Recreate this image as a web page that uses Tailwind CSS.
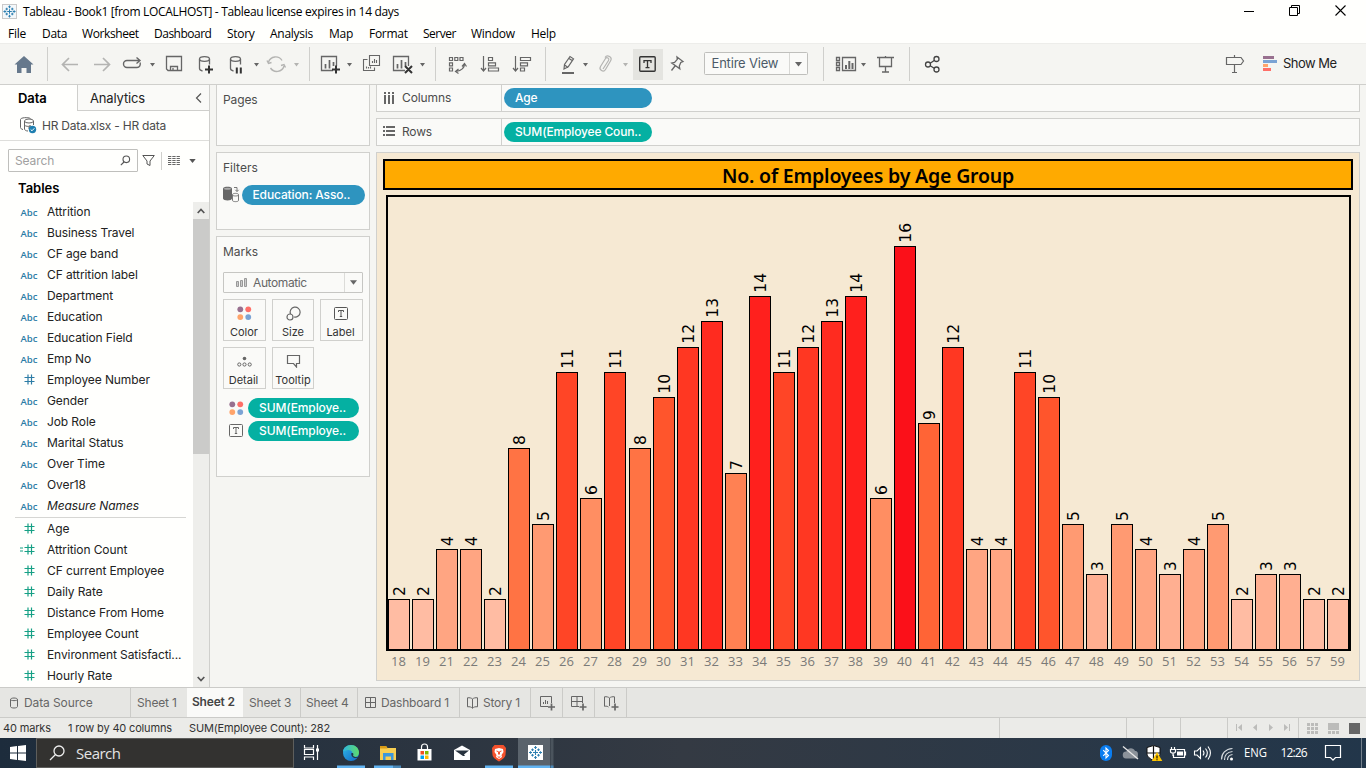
<!DOCTYPE html>
<html lang="en">
<head>
<meta charset="utf-8">
<title>Tableau - Book1</title>
<script src="https://cdn.jsdelivr.net/npm/@tailwindcss/browser@4"></script>
</head>
<body class="w-[1366px] h-[768px] overflow-hidden flex flex-col bg-[#f5f5f2] font-['Inter','Noto_Sans',sans-serif] text-[12px] text-[#333] leading-none">

<svg class="hidden">
  <defs>
    <symbol id="caret" viewBox="0 0 8 5"><path d="M0 0h8L4 5z" fill="currentColor"/></symbol>
    <symbol id="label" viewBox="0 0 14 14"><rect x=".5" y=".5" width="13" height="12" rx="1" fill="none" stroke="currentColor"/><path d="M4.500 5V3.500h5V5M7 3.500v6M5.800 9.500h2.400" fill="none" stroke="currentColor"/></symbol>
    <symbol id="dots" viewBox="0 0 16 16"><circle cx="3.500" cy="3.500" r="3.100" fill="#98708f"/><circle cx="12" cy="3.500" r="3.100" fill="#ff6f68"/><circle cx="3.500" cy="11.800" r="3.100" fill="#ffa46b"/><circle cx="12" cy="11.800" r="3.100" fill="#7ba3d4"/></symbol>
    <symbol id="hash" viewBox="0 0 11 11"><path d="M4 .5v10M7.500 .5v10M.5 3.500h10M.5 7.500h10" fill="none" stroke="currentColor" stroke-width="1.200"/></symbol>
    <symbol id="snow" viewBox="0 0 14 14"><path d="M7 4.500v5M4.500 7h5M7 .5v3M5.700 2h2.600M7 10.500v3M5.700 12h2.600M.5 7h3M2 5.700v2.600M10.500 7h3M12 5.700v2.600M4 3v2.600M2.700 4.300h2.600M10 3v2.600M8.700 4.300h2.600M4 8.400V11M2.700 9.700h2.600M10 8.400V11M8.700 9.700h2.600" fill="none" stroke="#2d7fb0" stroke-width="1.100"/></symbol>
  </defs>
</svg>

<!-- Title bar -->
<header class="h-[23px] shrink-0 bg-[#fffffd] flex items-center pl-[2px] font-['Open_Sans',sans-serif] text-black">
  <div class="w-[15px] h-[15px] border border-[#c9c9c9] bg-[#f4f8fa] flex items-center justify-center"><svg class="w-[13px] h-[13px]"><use href="#snow"/></svg></div>
  <span class="ml-[6px] text-[12px] tracking-[-0.33px] whitespace-nowrap">Tableau - Book1 [from LOCALHOST] - Tableau license expires in 14 days</span>
  <div class="ml-auto flex items-center pr-[20px] pb-[2px] gap-[35px]">
    <svg width="10" height="10"><path d="M0 5.500h10" stroke="#000"/></svg>
    <svg width="11" height="11" fill="none" stroke="#000"><path d="M.5 2.500h8v8h-8zM2.500 2.500v-2h8v8h-2"/></svg>
    <svg width="11" height="11"><path d="M.5 .5l10 10M10.500 .5l-10 10" stroke="#000" stroke-width="1.100"/></svg>
  </div>
</header>

<!-- Menu -->
<nav class="h-[20px] shrink-0 bg-[#fffffd] flex items-center pl-[8px] pt-[2px] font-['Open_Sans',sans-serif] text-[12px] text-black tracking-[-0.28px] whitespace-nowrap">
  <span class="w-[34px]">File</span><span class="w-[40px]">Data</span><span class="w-[72px] tracking-[-0.4px]">Worksheet</span><span class="w-[73px] tracking-[-0.5px]">Dashboard</span><span class="w-[43px]">Story</span><span class="w-[59px]">Analysis</span><span class="w-[40px]">Map</span><span class="w-[54px]">Format</span><span class="w-[48px] tracking-[-0.5px]">Server</span><span class="w-[60px]">Window</span><span>Help</span>
</nav>

<!-- Toolbar -->
<div class="h-[42px] shrink-0 border-t border-b border-t-[#ededea] border-b-[#cfcfcc] text-[#666]">
 <svg width="1366" height="40" viewBox="0 44 1366 40" fill="none" stroke="#666" stroke-width="1.300">
  <path d="M24 56l9.500 8.500H31V73h-4.500v-5h-5v5H17v-8.500h-2.500z" fill="#66788c" stroke="none"/>
  <path d="M47.500 47v34M309.500 47v34M435.500 47v34M545.500 47v34M823.500 47v34M909.500 47v34" stroke="#cfcfcc" stroke-width="1"/>
  <path d="M78 64.500H63M69 58l-6.500 6.500L69 71M94 64.500h15M103 58l6.500 6.500L103 71" stroke="#b4b4b2" stroke-width="1.700"/>
  <path d="M134 60.500h-7a3.500 3.500 0 0 0 0 7h10a3.500 3.500 0 0 0 3-5M134 60.500h5.500M136.500 57.500l3.500 3-3.500 3" stroke-width="1.400"/>
  <path d="M166.500 56.500h15v14h-13.500l-1.500-1.500zM170.500 70v-3.500h7V70M173 70v-2"/>
  <path d="M199.500 59v9.500c0 1.300 1 2 3 2.500M209.500 59v5.500M230.500 59v9.500c0 1.300 1 2 3 2.500M240.500 59v5.500" />
  <ellipse cx="204.500" cy="59" rx="5" ry="2.300"/><ellipse cx="235.500" cy="59" rx="5" ry="2.300"/>
  <path d="M205 69.500h8M209 65.500v8M236.800 67.500v6M240.800 67.500v6" stroke="#333" stroke-width="2"/>
  <path d="M268.500 62a7.500 7.500 0 0 1 13.500-1.500M284 66a7.500 7.500 0 0 1-13.500 2M267 60.500l1.500 3 3-1M285.500 67.500l-1.500-3-3 1" stroke="#b4b4b2" stroke-width="1.400"/>
  <path d="M333 70.500h-11.500v-14h15V66M405 70.500h-11.500v-14h15V66"/>
  <path d="M325.500 64v4.500M329.500 60v8.500M333.500 62v4M397.500 64v4.500M401.500 60v8.500M405.500 62v4" stroke-width="1.700"/>
  <path d="M332 69.500h8M336 65.500v8M405 66l7 7M412 66l-7 7" stroke="#333" stroke-width="2"/>
  <path d="M369.500 55.500h10v10h-10zM367.500 59.500h-4v11h11v-3M372.500 63v-2M374.500 63v-4M376.500 63v-3M366.500 68.500v-2M368.500 68.500v-1.500M370.500 68.500v-2" stroke-width="1.100"/>
  <g stroke="none" fill="#666"><path d="M150 63h5l-2.500 3.500zM254 63h5l-2.500 3.500zM347 63h5l-2.500 3.500zM420 63h5l-2.500 3.500zM583 63h5l-2.500 3.500zM861 63h5l-2.500 3.500z"/><path d="M294 63h5l-2.500 3.500zM623 63h5l-2.500 3.500z" fill="#b4b4b2"/></g>
  <g stroke-width="1.200"><path d="M449.500 57.500h3v3h-3zM454.800 57.500h3v3h-3zM460 57.500h3v3h-3zM449.500 62.800h3v3h-3zM449.500 68h3v3h-3zM464.500 64c0 4-3 6.500-8.500 7.500M462 66.500l2.500-3 2 3M458.500 69l-3 2.500 3 2"/>
  <path d="M483.500 56v14M481 68l2.500 3 2.500-3M488.500 57.500h4v3h-4zM488.500 62.800h7v3h-7zM488.500 68h10v3h-10zM515.500 56v14M513 68l2.500 3 2.500-3M520.500 57.500h10v3h-10zM520.500 62.800h7v3h-7zM520.500 68h4v3h-4z"/></g>
  <path d="M564 69l.5-4.500 5.500-8 3.500 2.300-5.300 8zM564.500 65l3.700 2.500M569 58.500l3.500 2.300" stroke-width="1.200"/><path d="M562 73h12" stroke-width="2"/>
  <path d="M603 69l5.500-8.500a1.800 1.800 0 0 0-3-2l-5 8a2.800 2.800 0 0 0 5 3l5-8.500a3 3 0 0 0-5.500-3.500" stroke="#b4b4b2" stroke-width="1.200"/>
  <rect x="633" y="49" width="30" height="31" fill="#e4e4e0" stroke="none"/>
  <rect x="639.700" y="56.700" width="15.500" height="14.500" rx="1" stroke="#333" stroke-width="1.400"/><path d="M644 63v-2.300h7V63M647.500 60.700v7M645.500 67.700h4" stroke="#333"/>
  <path d="M677 57l6 4.500-2.200 1-1.500 3.500.5 2.700-8-5.700 2.800-.6 2.700-3zM675 66l-3.500 4.500"/>
  <rect x="704.500" y="52.500" width="103" height="22" rx="1" fill="#fafaf8" stroke="#bfbfbc" stroke-width="1"/><path d="M789.500 53v21" stroke="#d8d8d5" stroke-width="1"/><path d="M795 62h7l-3.500 4.500z" fill="#666" stroke="none"/>
  <path d="M842.500 57.500h13v13h-13zM836.500 57.500h3v3h-3zM836.500 62.500h3v3h-3zM836.500 67.500h3v3h-3z"/><path d="M846 65v4M849.300 61v8M852.500 63v6" stroke-width="2"/>
  <path d="M877 57.500h17M879.500 58v8.500h12V58M885.500 56v1M885.500 67v5M882 72h7"/>
  <g stroke="#444"><circle cx="928" cy="64.500" r="2.500"/><circle cx="936.500" cy="59" r="2.500"/><circle cx="936.500" cy="69.500" r="2.500"/><path d="M930.200 63.200l4-2.700M930.200 65.800l4 2.400"/></g>
  <path d="M1226.500 57.500h14.500l2.500 3.500-2.500 3.500h-14.500zM1234.500 55v2.500M1234.500 64.500v8M1232 72.500h5" stroke-width="1.200"/>
  <g stroke="none"><path d="M1263 56h11v3h-11z" fill="#98708f"/><path d="M1263 60h14v3h-14z" fill="#7ba3d4"/><path d="M1263 64h5v3h-5z" fill="#ffa46b"/><path d="M1263 68h8v3h-8z" fill="#ff6f68"/></g>
  <text x="711.500" y="68" fill="#4c5a68" stroke="none" font-size="13" textLength="67" class="font-['Inter']">Entire View</text>
  <text x="1283" y="68" fill="#222" stroke="none" font-size="13" textLength="54" class="font-['Inter']">Show Me</text>
 </svg>
</div>

<main class="flex h-[602px] shrink-0">
  <!-- Data pane -->
  <aside class="w-[210px] shrink-0 border-r border-[#cfcfcc] bg-[#fffffd] flex flex-col h-[602px] overflow-hidden">
    <div class="flex h-[26px] shrink-0 text-[13px]">
      <div class="w-[77px] pl-[18px] flex items-center font-semibold text-black tracking-[-0.1px]">Data</div>
      <div class="flex-1 border-l border-b border-[#cfcfcc] bg-[#fafaf8] flex items-center pl-[12px] pr-[7px] text-[#222] tracking-[-0.15px]"><span class="pt-px">Analytics</span><svg class="ml-auto" width="7" height="10"><path d="M6 .5L1.500 5 6 9.500" fill="none" stroke="#555" stroke-width="1.200"/></svg></div>
    </div>
    <div class="h-[30px] shrink-0 border-b border-[#dededb] flex items-center pl-[20px] text-[#4c4c4c]">
      <svg width="17" height="17" fill="none" stroke="#666"><ellipse cx="9" cy="4" rx="4.500" ry="2"/><path d="M4.500 4v8c0 1 1.500 2 3.500 2M13.500 4v4M10.500 1.500C8 0 .5 .5.500 2.500v8c0 1 1 1.700 2.500 2M4.500 8c1 1.500 4 1.700 6 1M8 11h2V8"/><circle cx="12.500" cy="12.500" r="3.700" fill="#1f7fb0" stroke="none"/><path d="M10.700 12.500l1.300 1.300 2.300-2.500" stroke="#fff"/></svg>
      <span class="ml-[5px] tracking-[-0.23px] whitespace-nowrap">HR Data.xlsx - HR data</span>
    </div>
    <div class="flex items-center h-[38px] shrink-0 pl-[8px] pt-[1px]">
      <div class="w-[130px] h-[23px] border border-[#bfbfbc] rounded-[1px] flex items-center pl-[6px] pr-[6px] text-[#a0a0a0] tracking-[-0.1px]">Search<svg class="ml-auto" width="11" height="11" fill="none" stroke="#555" stroke-width="1.100"><circle cx="6.300" cy="4.300" r="3.300"/><path d="M4 7L.8 10.200"/></svg></div>
      <svg class="ml-[4px]" width="13" height="13" fill="none" stroke="#555"><path d="M.8 1.500h11.500L8 7v4.500L5 10V7z"/></svg>
      <span class="ml-[6px] w-px h-[18px] bg-[#cfcfcc]"></span>
      <svg class="ml-[6px]" width="12" height="11" stroke="#666"><path d="M0 1.500h12M0 3.500h12M0 5.500h12M0 7.500h12M0 9.500h12" stroke-dasharray="3.300 1"/></svg>
      <svg class="ml-[9px] w-[7px] h-[4px] text-[#555]"><use href="#caret"/></svg>
    </div>
    <div class="h-[22px] shrink-0 pl-[18px] pt-[3px] text-[13px] font-semibold text-black">Tables</div>
    <div class="flex flex-1 min-h-0">
      <div class="flex-1 min-w-0 overflow-hidden">
        <div id="dims"></div>
        <div class="ml-[15px] mr-[7px] mt-[1px] h-px bg-[#d6d6d3]"></div>
        <div id="meas"></div>
      </div>
      <div class="w-[16px] mt-px bg-[#eeeeeb] flex flex-col items-center text-[#555]">
        <svg class="mt-[6px]" width="8" height="6" fill="none" stroke="currentColor" stroke-width="1.700"><path d="M.7 5L4 1.500 7.300 5"/></svg>
        <div class="mt-[5px] w-full h-[235px] bg-[#cbcbc9]"></div>
        <svg class="mt-auto mb-[5px]" width="8" height="6" fill="none" stroke="currentColor" stroke-width="1.700"><path d="M.7 1L4 4.500 7.300 1"/></svg>
      </div>
    </div>
  </aside>

  <!-- Cards -->
  <section class="ml-[6px] w-[154px] shrink-0 flex flex-col gap-[6px] text-[#4c4c4c]">
    <div class="h-[61px] border border-t-0 border-[#d0d0cd] bg-[#fafaf8] pt-[9px] pl-[6px] tracking-[-0.1px]">Pages</div>
    <div class="h-[78px] border border-[#d0d0cd] bg-[#fafaf8] pt-[9px] pl-[6px]">Filters
      <div class="flex items-center mt-[11px]">
        <svg width="18" height="18" viewBox="0 0 18 18"><path d="M0 2.500C0 0 9 0 9 2.500v10C9 15 0 15 0 12.500z" fill="#666"/><ellipse cx="4.500" cy="2.700" rx="3.500" ry="1" fill="#aaa"/><path d="M9.500 8.500c0-1.500 6-1.500 6 0v6c0 1.500-6 1.500-6 0zM9.500 9c0 1.300 6 1.300 6 0" fill="#fafaf8" stroke="#777"/><path d="M11 1.500h3v4M12.300 3.800L14 5.500l1.700-1.700" fill="none" stroke="#777"/></svg>
        <div class="ml-[1px] w-[123px] h-[20px] rounded-full bg-[#2e94bf] text-white flex items-center pl-[10.500px] font-medium tracking-[-0.13px] whitespace-nowrap">Education: Asso..</div>
      </div>
    </div>
    <div class="h-[241px] border border-[#d0d0cd] bg-[#fafaf8] pt-[9px] px-[6px]">Marks
      <div class="mt-[14px] h-[21px] w-[140px] border border-[#c6c6c3] rounded-[1px] flex items-center">
        <svg class="ml-[12px]" width="11" height="9" fill="#ccc" stroke="#999"><path d="M.5 3.500h2v5h-2zM4.500 2.500h2v6h-2zM8.500 .5h2v8h-2z"/></svg>
        <span class="ml-[6px] pt-px text-[#666] tracking-[-0.4px]">Automatic</span>
        <div class="ml-auto h-full w-[18px] border-l border-[#dcdcd9] flex items-center justify-center"><svg class="w-[7px] h-[5px] text-[#666]"><use href="#caret"/></svg></div>
      </div>
      <div class="mt-[6px] grid grid-cols-[43px_42px_43px] gap-[6px] text-[11px] text-[#333] text-center">
        <div class="h-[42px] border border-[#d0d0cd] flex flex-col items-center justify-between pt-[6px] pb-px"><svg class="w-[15px] h-[15px]"><use href="#dots"/></svg><span class="h-[14px] leading-[14px] pr-px">Color</span></div>
        <div class="h-[42px] border border-[#d0d0cd] flex flex-col items-center justify-between pt-[6px] pb-px"><svg width="15" height="15" fill="none" stroke="#666" stroke-width="1.200"><path d="M4.500 8a5 5 0 1 1 3.500 3"/><circle cx="4" cy="11" r="3"/></svg><span class="h-[14px] leading-[14px]">Size</span></div>
        <div class="h-[42px] border border-[#d0d0cd] flex flex-col items-center justify-between pt-[7px] pr-[2px] pb-px"><svg class="w-[14px] h-[14px] text-[#555]"><use href="#label"/></svg><span class="h-[14px] leading-[14px]">Label</span></div>
        <div class="h-[42px] border border-[#d0d0cd] flex flex-col items-center justify-between pt-[7px] pb-px"><svg width="15" height="13" fill="none" stroke="#666"><circle cx="7.500" cy="3.500" r="1.800" fill="#666" stroke="none"/><circle cx="2.300" cy="9.500" r="1.600"/><circle cx="7.500" cy="9.500" r="1.600"/><circle cx="12.700" cy="9.500" r="1.600"/></svg><span class="h-[14px] leading-[14px] pr-[2px]">Detail</span></div>
        <div class="h-[42px] border border-[#d0d0cd] flex flex-col items-center justify-between pt-[6px] pb-px"><svg width="15" height="14" fill="none" stroke="#666" stroke-width="1.200"><path d="M1.500 1.500h12v8h-3v3.500L7.500 9.500h-6z"/></svg><span class="h-[14px] leading-[14px]">Tooltip</span></div>
      </div>
      <div class="mt-[9px] pl-[6px] flex flex-col gap-[3px] text-white font-medium">
        <div class="flex items-center h-[20px]"><svg class="w-[15px] h-[15px]"><use href="#dots"/></svg><div class="ml-[4px] w-[111px] h-[20px] rounded-full bg-[#05b0a2] flex items-center pl-[11px] whitespace-nowrap tracking-[-0.1px]">SUM(Employe..</div></div>
        <div class="flex items-center h-[20px]"><svg class="w-[14px] h-[14px] text-[#666]"><use href="#label"/></svg><div class="ml-[5px] w-[111px] h-[20px] rounded-full bg-[#05b0a2] flex items-center pl-[11px] whitespace-nowrap tracking-[-0.1px]">SUM(Employe..</div></div>
      </div>
    </div>
  </section>

  <!-- Shelves and view -->
  <section class="ml-[6px] w-[984px] shrink-0 flex flex-col text-[#4c4c4c]">
    <div class="h-[27px] border border-t-0 border-[#d0d0cd] bg-[#fafaf8] flex items-center">
      <div class="w-[125px] h-full border-r border-[#d0d0cd] flex items-center pl-[7px] gap-[7px]"><svg class="-mt-[2px]" width="11" height="13" fill="#666"><path d="M0 1h2v2H0zM4 1h2v2H4zM8 1h2v2H8zM0 4h2v9H0zM4 4h2v9H4zM8 4h2v9H8z"/></svg><span class="tracking-[-0.1px]">Columns</span></div>
      <div class="ml-[2px] w-[148px] h-[20px] rounded-full bg-[#2e94bf] text-white flex items-center pl-[11px] font-medium tracking-[-0.2px]">Age</div>
    </div>
    <div class="mt-[6px] h-[28px] border border-[#d0d0cd] bg-[#fafaf8] flex items-center">
      <div class="w-[125px] h-full border-r border-[#d0d0cd] flex items-center pl-[6px] gap-[7px]"><svg class="-mt-[2px]" width="12" height="11" fill="#666"><path d="M0 0h2v2H0zM3 0h9v2H3zM0 4h2v2H0zM3 4h9v2H3zM0 8h2v2H0zM3 8h9v2H3z"/></svg><span class="tracking-[-0.2px]">Rows</span></div>
      <div class="ml-[2px] w-[148px] h-[20px] rounded-full bg-[#05b0a2] text-white flex items-center pl-[11px] font-medium tracking-[-0.15px] whitespace-nowrap">SUM(Employee Coun..</div>
    </div>
    <div class="mt-[6px] h-[529px] border border-[#d0d0cd] bg-[#f6e9d3] pt-[6px]">
      <div class="ml-[6px] w-[970px] h-[31px] border-2 border-black bg-[#ffaa00] flex items-center justify-center pt-[2px] font-['Noto_Sans',sans-serif] font-semibold text-[19.5px] text-black tracking-[-0.19px]"><span>No. of Employees by Age Group</span></div>
      <div id="bars" class="mt-[5px] ml-[9px] w-[965px] h-[456px] border-2 border-black flex items-end gap-[2px] font-['DejaVu_Sans',sans-serif] text-[15.5px] text-black"></div>
      <div id="ages" class="ml-[11px] w-[961px] mt-[2px] flex gap-[2px] font-['Open_Sans',sans-serif] text-[13px] text-[#7a7a78]"></div>
    </div>
  </section>
</main>

<!-- Sheet tabs -->
<div class="h-[31px] shrink-0 border-t border-b border-[#cbcbc8] bg-[#e6e6e3] flex text-[12px] text-[#666] whitespace-nowrap tracking-[-0.2px]">
  <div class="w-[131px] border-r border-[#cbcbc8] flex items-center pl-[10px] gap-[6px] tracking-[-0.1px]"><svg width="8" height="12" fill="none" stroke="#666"><path d="M.5 2.500v7c0 2 7 2 7 0v-7c0-2-7-2-7 0c0 1.500 7 1.500 7 0"/></svg>Data Source</div>
  <div class="w-[56px] flex items-center pl-[6px]">Sheet 1</div>
  <div class="w-[56px] bg-[#fafaf8] flex items-center pl-[5px] font-semibold text-[#444] pb-[2px]">Sheet 2</div>
  <div class="w-[58px] border-r border-[#cbcbc8] flex items-center pl-[6px]">Sheet 3</div>
  <div class="w-[57px] border-r border-[#cbcbc8] flex items-center pl-[5px]">Sheet 4</div>
  <div class="w-[102px] border-r border-[#cbcbc8] flex items-center pl-[7px] gap-[5px]"><svg width="11" height="11" fill="none" stroke="#666"><path d="M.5 .5h10v10H.5zM5.500 .5v10M.5 5.500h10"/></svg>Dashboard 1</div>
  <div class="w-[71px] border-r border-[#cbcbc8] flex items-center pl-[7px] gap-[5px]"><svg width="11" height="12" fill="none" stroke="#666"><path d="M.5 .8C2.500 .5 4.500 1 5.500 2c1-1 3-1.500 5-1.200v9c-2-.3-4 .2-5 1.500-1-1.300-3-1.800-5-1.500zM5.500 2v9"/></svg>Story 1</div>
  <div class="w-[32px] border-r border-[#cbcbc8] flex items-center justify-center pl-px"><svg width="15" height="16" fill="none" stroke="#666"><path d="M8 11.500H.5v-10h11V8M3.500 9V7M5.500 9V5M7.500 9V6"/><path d="M11.500 8.500v7M8 12h7" stroke-width="1.700"/></svg></div>
  <div class="w-[32px] border-r border-[#cbcbc8] flex items-center justify-center pl-px"><svg width="16" height="16" fill="none" stroke="#666"><path d="M8 11.500H.5v-10h11V8M6 1.500v10M.5 6.500h11"/><path d="M12 8.500v7M8.500 12h7" stroke-width="1.700"/></svg></div>
  <div class="w-[32px] border-r border-[#cbcbc8] flex items-center justify-center pl-px"><svg width="16" height="16" fill="none" stroke="#666"><path d="M11.500 8V1.800c-2-.3-4 .2-5 1.200-1-1-3-1.500-5-1.200v9.500c2-.3 3 0 4 .7M6.500 3v8"/><path d="M12 8.500v7M8.500 12h7" stroke-width="1.700"/></svg></div>
</div>

<!-- Status bar -->
<div class="h-[20px] shrink-0 bg-[#ebebe8] flex items-center text-[11px] text-[#333] whitespace-nowrap tracking-[-0.16px]">
  <span class="ml-[3px] w-[65px]">40 marks</span><span class="w-[121px]">1 row by 40 columns</span><span>SUM(Employee Count): 282</span>
  <div class="ml-auto h-full flex">
    <div class="w-[127px] border-l border-[#cbcbc8]"></div><div class="w-[27px] border-l border-[#cbcbc8]"></div><div class="w-[27px] border-l border-[#cbcbc8]"></div><div class="w-[47px] border-l border-[#cbcbc8]"></div>
    <div class="w-[71px] border-l border-[#cbcbc8] flex items-center pl-[8px]"><svg width="54" height="8" fill="#bcbcba"><path d="M0 0h1v7H0zM6 0v7L2 3.500zM21 0v7l-4-3.500zM33 0v7l4-3.500zM48 0v7l4-3.500zM53 0h1v7h-1z"/></svg></div>
    <div class="w-[68px] border-l border-[#cbcbc8] flex items-center pl-[8px]"><svg width="54" height="11" fill="#bcbcba"><path d="M0 0h3v3H0zM4 0h3v3H4zM8 0h3v3H8zM0 4h3v3H0zM4 4h3v3H4zM8 4h3v3H8zM0 8h3v3H0zM4 8h3v3H4zM8 8h3v3H8zM21 0h11v7H21zM21 8h3v3h-3zM25 8h3v3h-3zM29 8h3v3h-3z"/><path d="M42 0h11v11H42z" fill="#666"/></svg></div>
  </div>
</div>

<!-- Taskbar -->
<footer class="h-[30px] shrink-0 flex bg-linear-to-r from-[#1d2c3c] via-[#343a43] to-[#22364a] text-white font-['Open_Sans',sans-serif]">
  <div class="w-[36px] flex items-center pl-[10px]"><svg width="16" height="16" fill="#fff"><path d="M0 2l7-1v6.500H0zM8 .9L16 0v7.500H8zM0 8.500h7V15l-7-1zM8 8.500h8V16l-8-1z"/></svg></div>
  <div class="w-[258px] border border-[#5e5e5c] bg-[#333230] flex items-center pl-[12px] gap-[11px] text-[15px] text-[#e4e4e4]"><svg width="16" height="16" fill="none" stroke="#eee" stroke-width="1.300"><circle cx="10" cy="6" r="5"/><path d="M6.500 9.500L1 15"/></svg><span class="tracking-[-0.5px]">Search</span></div>
  <svg width="1072" height="30" viewBox="294 738 1072 30">
    <path d="M518 738h32v30h-32z" fill="#5a636c"/><path d="M550.500 738h3v30h-3z" fill="#4b545d"/>
    <path d="M337 765.500h28v2.500h-28zM374 765.500h19v2.500h-19zM485 765.500h28v2.500h-28zM518 765.500h32v2.500h-32z" fill="#62b4f2"/><path d="M393 765.500h8v2.500h-8zM550.500 765.500h3v2.500h-3z" fill="#4a88b8"/>
    <path d="M304.500 745v3h9v-3M304.500 760v-3h9v3M304.500 749.500h9v5h-9zM317.500 745v15" fill="none" stroke="#fff" stroke-width="1.200"/><path d="M316 748.500h3v3h-3z" fill="#fff"/>
    <defs><linearGradient id="e" x1="0" y1="0" x2="1" y2="1"><stop offset="0" stop-color="#2fb8e8"/><stop offset="1" stop-color="#1266c4"/></linearGradient><linearGradient id="g" x1="0" x2="1"><stop offset="0" stop-color="#2eb6e0"/><stop offset="1" stop-color="#5fdc6a"/></linearGradient></defs>
    <circle cx="351" cy="753" r="8" fill="url(#e)"/><path d="M343 752c0-4 3.500-7 8-7s8 3.500 8 7.500c0 3-2 4.500-4.500 4.500s-3.500-1-2.500-2c1.500-2-.5-5-3.500-5-2.500 0-4.500 1-5.500 2z" fill="url(#g)"/><path d="M351.500 753c-.8 2.500 1 5 4 5 1.300 0 2.300-.4 3-1-1 0-3 .3-4.500-.5-1.200-.6-1-1.500-.5-2.300 0-.8-.8-1.600-2-1.200z" fill="#233648"/>
    <path d="M380 746h6l1.500 2h8.500v12h-16z" fill="#f8cf52"/><path d="M380 746h6l1.500 2.500H380z" fill="#d99b16"/><path d="M383 753h10.500v7h-2.500v-3.500h-5.500v3.500H383z" fill="#3d98dc"/>
    <path d="M417.500 749h14v11.500h-14z" fill="#fff"/><path d="M421.500 749v-2a3 3 0 0 1 6 0v2" fill="none" stroke="#fff" stroke-width="1.200"/><path d="M420.500 751h3.500v3.500h-3.500z" fill="#f25022"/><path d="M425 751h3.500v3.500H425z" fill="#7fba00"/><path d="M420.500 755.500h3.500v3.500h-3.500z" fill="#00a4ef"/><path d="M425 755.500h3.500v3.500H425z" fill="#ffb900"/>
    <path d="M454 750l8-4.500 8 4.500v10h-16z" fill="#fff"/><path d="M455 750.500h14l-5 4 1 1.500h-2l-1.500-1z" fill="#27323e"/>
    <path d="M494.500 745h9l2.500 3-.5 7c-.5 3-4 5-6.500 6.500-2.500-1.500-6-3.500-6.500-6.500l-.5-7z" fill="#f4512c"/><path d="M495 749l4-1 4 1 .5 3-2 3 .5 2-3 2-3-2 .5-2-2-3z" fill="#fff"/><path d="M496.500 751l2 .7v2.800M501.500 751l-2 .7v2.800M497.700 756.500l1.300 1 1.300-1" fill="none" stroke="#f4512c"/>
    <path d="M528 745h15v15h-15z" fill="#fff"/><use href="#snow" x="528.500" y="745.500" width="14" height="14"/>
    <rect x="1100" y="745" width="12" height="16" rx="6" fill="#0a7df0"/><path d="M1103.200 750.200l5.300 5.300-2.500 2.500v-10l2.500 2.500-5.300 5.300" fill="none" stroke="#fff" stroke-width="1.100"/>
    <path d="M1126 758.500a3.500 3.500 0 0 1 .5-7c1-4 7-4.500 8.500-.5 3 0 3.500 2 2.500 7.500z" fill="#8b929a"/><path d="M1123 746.500l15 12.500" stroke="#e8e8e8" stroke-width="1.300"/>
    <path d="M1153.500 745.500l6.500 2v6c0 3-3 5.500-6.500 7-3.500-1.500-6.500-4-6.500-7v-6z" fill="#fff" stroke="#111"/><path d="M1153.500 746v14M1147 753h13" stroke="#111" stroke-width="1.200"/><path d="M1157 752l5.300 9h-10.500z" fill="#fdc400"/><path d="M1157 755.500v3M1157 759.200v1" stroke="#111" stroke-width="1.200"/>
    <path d="M1176.500 749.500h8v8h-11v-3M1185.500 751.500v4M1171.500 747v2M1174.500 747v2M1170.500 749.500h5v2c0 2-5 2-5 0zM1173 753v3" fill="none" stroke="#fff" stroke-width="1.200"/><path d="M1177 751.500h6v4h-6z" fill="#fff"/>
    <path d="M1194.500 751h2.500l3.500-3.500v11l-3.500-3.500h-2.500zM1203 750.500c1.200 1.500 1.200 3.500 0 5M1205.500 748.500c2.200 2.700 2.200 6.300 0 9M1208 746.500c3 4 3 9 0 13" fill="none" stroke="#fff" stroke-width="1.100"/>
    <path d="M1221.500 759.500c0-6 4-10.500 11-11M1224.500 760c0-5 3-8 8-8.500M1227.500 760c0-3 2-5 5-5.500" fill="none" stroke="#d5dade" stroke-width="1.200"/><circle cx="1231.500" cy="759" r="1.500" fill="#fff"/>
    <text x="1244" y="757" fill="#fff" font-size="12" textLength="23" lengthAdjust="spacingAndGlyphs">ENG</text>
    <text x="1280.500" y="757" fill="#fff" font-size="12" textLength="27">12:26</text>
    <path d="M1325.500 745.500h15v12h-5l-2.500 2.700-2.500-2.700h-5z" fill="none" stroke="#fff" stroke-width="1.200"/>
    <path d="M1361.500 738v30" stroke="#74808c"/>
  </svg>
</footer>

<script>
const row = (name, icon, extra) => `<div class="h-[21px] flex items-center whitespace-nowrap text-[#222] tracking-[-0.1px] ${extra || ''}"><span class="w-[47px] shrink-0 flex items-center justify-center pl-[11px]">${icon}</span><span>${name}</span></div>`;
const abc = `<span class="font-['Open_Sans'] font-semibold text-[9.5px] pt-[2px] tracking-[0px] text-[#2d7ca6] not-italic">Abc</span>`;
const blue = `<svg class="w-[11px] h-[11px] text-[#2d7ca6]"><use href="#hash"/></svg>`;
const green = `<svg class="w-[11px] h-[11px] text-[#16a085]"><use href="#hash"/></svg>`;
const calc = `<svg width="4" height="5" class="-ml-[4px]"><path d="M0 1h3M0 4h3" stroke="#16a085"/></svg>` + green;
const dims = ['Attrition','Business Travel','CF age band','CF attrition label','Department','Education','Education Field','Emp No','Employee Number','Gender','Job Role','Marital Status','Over Time','Over18','Measure Names'];
document.getElementById('dims').innerHTML = dims.map(n => row(n, n === 'Employee Number' ? blue : abc, n === 'Measure Names' ? 'italic' : '')).join('');
const meas = ['Age','Attrition Count','CF current Employee','Daily Rate','Distance From Home','Employee Count','Environment Satisfacti...','Hourly Rate'];
document.getElementById('meas').innerHTML = meas.map(n => row(n, n === 'Attrition Count' ? calc : green)).join('');

const color = {2:'#ffbca3',3:'#ffaf91',4:'#ffa582',5:'#ff9a72',6:'#ff8e62',7:'#ff8153',8:'#ff7344',9:'#ff6436',10:'#ff552c',11:'#ff4526',12:'#ff3722',13:'#ff2b1f',14:'#ff201d',16:'#fb1019'};
const ages = [18,19,21,22,23,24,25,26,27,28,29,30,31,32,33,34,35,36,37,38,39,40,41,42,43,44,45,46,47,48,49,50,51,52,53,54,55,56,57,59];
const counts = [2,2,4,4,2,8,5,11,6,11,8,10,12,13,7,14,11,12,13,14,6,16,9,12,4,4,11,10,5,3,5,4,3,4,5,2,3,3,2,2];
// Every tenth column takes one spare pixel so the 40 columns fill the plot.
const spare = i => i && i % 10 === 0 ? 'ml-px' : '';
document.getElementById('bars').innerHTML = counts.map((v, i) => `<div class="w-[22px] shrink-0 flex flex-col items-center ${spare(i)}"><span class="[writing-mode:vertical-rl] rotate-180 leading-[20px] mb-[3px] ml-px">${v}</span><div class="w-[22px] border border-b-0 border-black" style="height:${Math.floor(v * 25.26 - 0.38)}px;background:${color[v]}"></div></div>`).join('');
document.getElementById('ages').innerHTML = ages.map((a, i) => `<span class="w-[22px] shrink-0 text-center leading-[16px] pr-px ${spare(i)}">${a}</span>`).join('');
</script>
</body>
</html>
